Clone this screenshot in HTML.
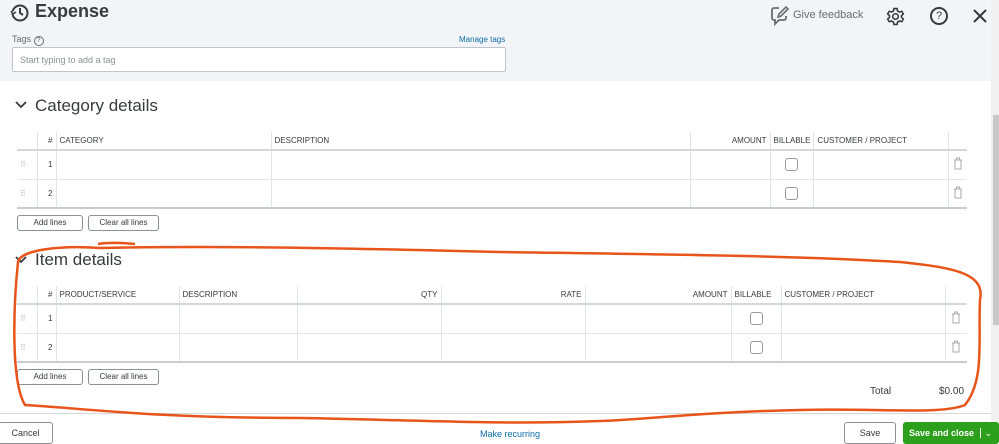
<!DOCTYPE html>
<html><head><style>
*{box-sizing:border-box;margin:0;padding:0}
body{width:999px;height:440px;overflow:hidden;background:#fff;font-family:"Liberation Sans",sans-serif;color:#393a3d;position:relative}
.a{position:absolute}
.top{left:0;top:0;width:991px;height:81px;background:#f3f4f7}
table{position:absolute;border-collapse:collapse;font-size:8px}
td,th{border-left:1px solid #e3e4e6;height:29px;padding:0 3px;font-weight:normal;text-align:left}
th{height:18px;color:#393a3d;font-size:8px}
tr.h{border-bottom:2px solid #d4d7dc}
tr.r{border-bottom:1px solid #e3e4e6}
tr.last{border-bottom:2px solid #c9ccd1}
td:first-child,th:first-child{border-left:none}
.cb{display:inline-block;width:13px;height:13px;border:1px solid #999;border-radius:3px;vertical-align:middle}
.btn{border:1px solid #8d9096;border-radius:3px;background:#fff;font-size:8px;text-align:center;line-height:14px;height:16px}
.dots{color:#bbb;font-size:8px}
.tr{text-align:center}
</style></head><body>
<div class="a top"></div>
<div class="a" style="left:991px;top:0;width:8px;height:440px;background:#f0f0f0"></div>
<div class="a" style="left:993px;top:115px;width:6px;height:210px;background:#c8c8c8"></div>
<svg class="a" style="left:9px;top:2px" width="22" height="22" viewBox="0 0 22 22"><circle cx="11" cy="11" r="7.5" fill="none" stroke="#393a3d" stroke-width="2"/><path d="M11 6v5l3 2" stroke="#393a3d" stroke-width="2" fill="none"/><path d="M2 9l2 3 3-2" fill="#f3f4f7" stroke="#393a3d" stroke-width="1.5"/></svg>
<div class="a" style="left:35px;top:1px;font-size:18px;font-weight:bold">Expense</div>
<svg class="a" style="left:770px;top:6px" width="20" height="20" viewBox="0 0 20 20"><path d="M9 2H4a2 2 0 0 0-2 2v8a2 2 0 0 0 2 2h1v4l4-4h5a2 2 0 0 0 2-2V10" fill="none" stroke="#6b6c72" stroke-width="1.8"/><path d="M8 11l1-3 7-7 2 2-7 7z" fill="none" stroke="#6b6c72" stroke-width="1.6"/></svg>
<div class="a" style="left:793px;top:9px;font-size:11px;color:#6b6c72">Give feedback</div>
<svg class="a" style="left:886px;top:7px" width="19" height="19" viewBox="0 0 24 24"><path d="M10 2h4l.6 3 2.4 1.4 2.9-1 2 3.4-2.3 2v2.4l2.3 2-2 3.4-2.9-1L14.6 19 14 22h-4l-.6-3L7 17.6l-2.9 1-2-3.4 2.3-2v-2.4l-2.3-2 2-3.4 2.9 1L9.4 5z" fill="none" stroke="#393a3d" stroke-width="2"/><circle cx="12" cy="12" r="3.5" fill="none" stroke="#393a3d" stroke-width="2"/></svg>
<div class="a" style="left:930px;top:7px;width:18px;height:18px;border:2px solid #393a3d;border-radius:50%;font-size:11px;text-align:center;line-height:14px">?</div>
<svg class="a" style="left:973px;top:9px" width="14" height="14"><path d="M1 1l12 12M13 1L1 13" stroke="#393a3d" stroke-width="2"/></svg>
<div class="a" style="left:12px;top:34px;font-size:9px;color:#6b6c72">Tags <span style="display:inline-block;width:10px;height:10px;border:1px solid #6b6c72;border-radius:50%;font-size:7px;text-align:center;line-height:8px">?</span></div>
<div class="a" style="left:459px;top:35px;font-size:8px;color:#0d6fa8">Manage tags</div>
<div class="a" style="left:12px;top:47px;width:494px;height:25px;background:#fff;border:1px solid #c1c4c8;border-radius:2px;font-size:9px;color:#8d9096;padding:7px 7px">Start typing to add a tag</div>
<svg class="a" style="left:15px;top:101px" width="12" height="8"><path d="M1 1l5 5 5-5" fill="none" stroke="#393a3d" stroke-width="1.8"/></svg>
<div class="a" style="left:35px;top:96px;font-size:17px">Category details</div>
<table style="left:17px;top:132px;width:950px">
<tr class="h"><th style="width:20px"></th><th style="width:19px;text-align:right">#</th><th style="width:215px">CATEGORY</th><th style="width:419px">DESCRIPTION</th><th style="width:80px;text-align:right">AMOUNT</th><th style="width:43px">BILLABLE</th><th style="width:135px">CUSTOMER / PROJECT</th><th></th></tr>
<tr class="r"><td class="dots">⠿</td><td style="text-align:right">1</td><td></td><td></td><td></td><td style="text-align:center"><span class="cb"></span></td><td></td><td class="tr"><svg width="10" height="13"><path d="M1 3h8M3.5 3V1h3v2M2 3v9h6V3" fill="none" stroke="#aaa"/></svg></td></tr>
<tr class="last"><td class="dots">⠿</td><td style="text-align:right">2</td><td></td><td></td><td></td><td style="text-align:center"><span class="cb"></span></td><td></td><td class="tr"><svg width="10" height="13"><path d="M1 3h8M3.5 3V1h3v2M2 3v9h6V3" fill="none" stroke="#aaa"/></svg></td></tr>
</table>
<div class="a btn" style="left:17px;top:215px;width:66px">Add lines</div>
<div class="a btn" style="left:88px;top:215px;width:71px">Clear all lines</div>
<svg class="a" style="left:15px;top:256px" width="12" height="8"><path d="M1 1l5 5 5-5" fill="none" stroke="#393a3d" stroke-width="1.8"/></svg>
<div class="a" style="left:35px;top:250px;font-size:17px">Item details</div>
<table style="left:17px;top:286px;width:950px">
<tr class="h"><th style="width:20px"></th><th style="width:19px;text-align:right">#</th><th style="width:123px">PRODUCT/SERVICE</th><th style="width:118px">DESCRIPTION</th><th style="width:144px;text-align:right">QTY</th><th style="width:144px;text-align:right">RATE</th><th style="width:146px;text-align:right">AMOUNT</th><th style="width:50px">BILLABLE</th><th style="width:164px">CUSTOMER / PROJECT</th><th></th></tr>
<tr class="r"><td class="dots">⠿</td><td style="text-align:right">1</td><td></td><td></td><td></td><td></td><td></td><td style="text-align:center"><span class="cb"></span></td><td></td><td class="tr"><svg width="10" height="13"><path d="M1 3h8M3.5 3V1h3v2M2 3v9h6V3" fill="none" stroke="#aaa"/></svg></td></tr>
<tr class="last"><td class="dots">⠿</td><td style="text-align:right">2</td><td></td><td></td><td></td><td></td><td></td><td style="text-align:center"><span class="cb"></span></td><td></td><td class="tr"><svg width="10" height="13"><path d="M1 3h8M3.5 3V1h3v2M2 3v9h6V3" fill="none" stroke="#aaa"/></svg></td></tr>
</table>
<div class="a btn" style="left:17px;top:369px;width:66px">Add lines</div>
<div class="a btn" style="left:88px;top:369px;width:71px">Clear all lines</div>
<div class="a" style="left:870px;top:386px;font-size:10px">Total</div>
<div class="a" style="left:939px;top:386px;font-size:10px">$0.00</div>
<div class="a" style="left:0;top:413px;width:991px;height:27px;border-top:1px solid #d4d7dc;background:#fff"></div>
<div class="a btn" style="left:-2px;top:422px;width:55px;height:22px;line-height:20px;font-size:9px">Cancel</div>
<div class="a" style="left:480px;top:429px;font-size:9px;color:#0d6fa8">Make recurring</div>
<div class="a btn" style="left:844px;top:422px;width:52px;height:22px;line-height:20px;font-size:9px">Save</div>
<div class="a" style="left:903px;top:422px;width:96px;height:22px;background:#2ca01c;border-radius:3px;color:#fff;font-size:9px;font-weight:bold;line-height:22px;padding-left:6px">Save and close <span style="border-left:1px solid #fff;padding-left:4px;margin-left:3px;font-weight:normal">⌄</span></div>
<svg class="a" style="left:0;top:0" width="999" height="440"><path d="M100 248 C200 246 300 247 500 252 C700 255 800 256 900 262 C960 268 985 275 980 300 C978 340 985 380 965 405 C940 415 880 408 800 410 C700 412 640 420 600 421 C500 425 420 420 300 418 C150 418 80 408 25 405 C10 380 14 300 18 262 C20 250 60 245 100 248 M98 244 C110 242 125 243 135 244" fill="none" stroke="#e8541a" stroke-width="2.5"/></svg>
</body></html>
